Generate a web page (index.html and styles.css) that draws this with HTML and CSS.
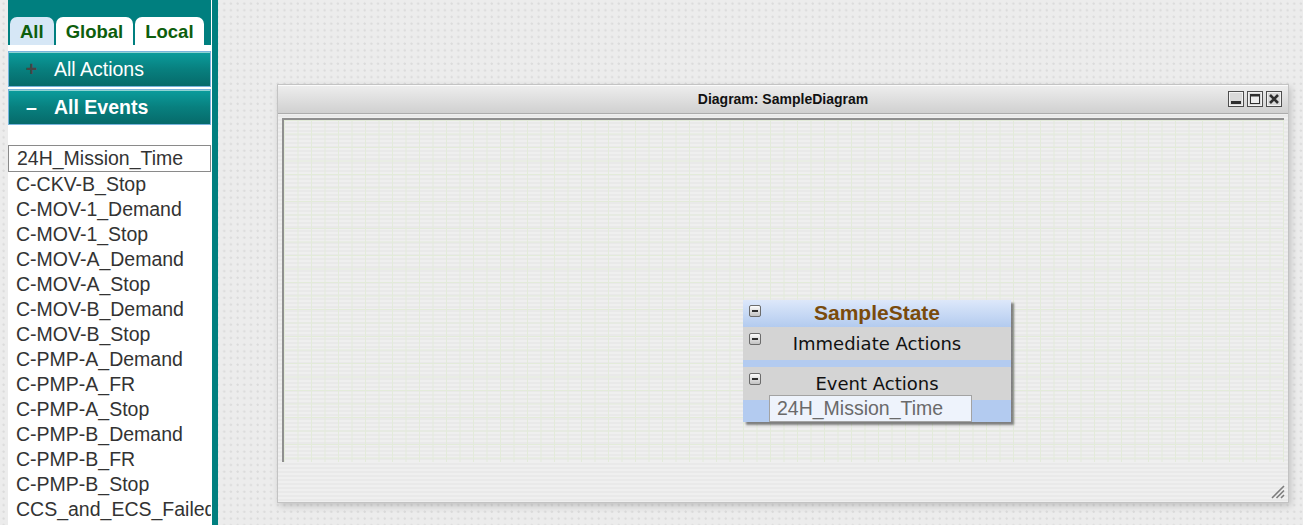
FILE: index.html
```html
<!DOCTYPE html>
<html lang="en">
<head>
<meta charset="utf-8">
<title>Diagram: SampleDiagram</title>
<link rel="stylesheet" href="styles.css">
</head>
<body>
<div class="app">
  <aside class="sidebar">
    <div class="tabs">
      <div class="tab active">All</div>
      <div class="tab">Global</div>
      <div class="tab">Local</div>
    </div>
    <div class="acc"><span class="sym plus">+</span><span>All Actions</span></div>
    <div class="acc open"><span class="sym">–</span><span>All Events</span></div>
    <ul class="events">
      <li class="selected">24H_Mission_Time</li>
      <li>C-CKV-B_Stop</li>
      <li>C-MOV-1_Demand</li>
      <li>C-MOV-1_Stop</li>
      <li>C-MOV-A_Demand</li>
      <li>C-MOV-A_Stop</li>
      <li>C-MOV-B_Demand</li>
      <li>C-MOV-B_Stop</li>
      <li>C-PMP-A_Demand</li>
      <li>C-PMP-A_FR</li>
      <li>C-PMP-A_Stop</li>
      <li>C-PMP-B_Demand</li>
      <li>C-PMP-B_FR</li>
      <li>C-PMP-B_Stop</li>
      <li>CCS_and_ECS_Failed</li>
    </ul>
  </aside>
  <div class="splitter"></div>
  <main class="workspace">
    <section class="window">
      <header class="titlebar">
        <span></span>
        <span class="title">Diagram: SampleDiagram</span>
        <span class="winbtns">
          <svg class="wbtn" width="16" height="16" viewBox="0 0 16 16"><rect x="0.5" y="0.5" width="15" height="15" fill="#d9d9d9" stroke="#4e4e4e"/><rect x="1.5" y="1.5" width="13" height="13" fill="none" stroke="#f2f2f2"/><rect x="3" y="10" width="10" height="3" fill="#2e2e2e"/></svg>
          <svg class="wbtn" width="16" height="16" viewBox="0 0 16 16"><rect x="0.5" y="0.5" width="15" height="15" fill="#d9d9d9" stroke="#4e4e4e"/><rect x="1.5" y="1.5" width="13" height="13" fill="none" stroke="#f2f2f2"/><rect x="3.5" y="3.5" width="9" height="9" fill="#ececec" stroke="#2e2e2e"/><rect x="3" y="3" width="10" height="2.5" fill="#2e2e2e"/></svg>
          <svg class="wbtn" width="16" height="16" viewBox="0 0 16 16"><rect x="0.5" y="0.5" width="15" height="15" fill="#d9d9d9" stroke="#4e4e4e"/><rect x="1.5" y="1.5" width="13" height="13" fill="none" stroke="#f2f2f2"/><path d="M4 4 L12 12 M12 4 L4 12" stroke="#2e2e2e" stroke-width="2.6"/></svg>
        </span>
      </header>
      <div class="winbody">
        <div class="canvas">
          <div class="node">
            <div class="node-head"><span class="minus"></span>SampleState</div>
            <div class="node-sec imm"><span class="minus"></span>Immediate Actions</div>
            <div class="node-sec"><span class="minus"></span>Event Actions</div>
            <div class="node-item">24H_Mission_Time</div>
          </div>
        </div>
      </div>
      <svg class="grip" width="15" height="15" viewBox="0 0 15 15"><path d="M14 2 L2 14 M14 6.5 L6.5 14 M14 11 L11 14" stroke="#7d7d7d" stroke-width="1.6"/></svg>
    </section>
  </main>
</div>
</body>
</html>
```
FILE: styles.css
```css
* { box-sizing: border-box; }
html, body { margin: 0; height: 100%; }
body {
  font-family: "Liberation Sans", Arial, sans-serif;
  background-color: #ececec;
  background-image: radial-gradient(circle at 3.5px 3.5px, #dbdbdb 0.9px, transparent 1.4px);
  background-size: 6.7px 6.7px;
  overflow: hidden;
}
.app { display: flex; height: 525px; padding-left: 8px; }

/* sidebar */
.sidebar { width: 203px; display: flex; flex-direction: column; background: #fff; }
.tabs {
  display: flex; gap: 2px;
  background: #007f7f;
  padding: 17px 0 0 2px;
  border-bottom: 6px solid #fff;
}
.tab {
  height: 28px; line-height: 29px;
  padding: 0 10px;
  background: #fff;
  border-radius: 7px 7px 0 0;
  font-weight: bold; font-size: 18.5px;
  color: #0d5e0d;
}
.tab.active { background: #d6e7f6; }
.acc {
  height: 36px; display: flex; align-items: center;
  margin-bottom: 2px;
  color: #fff; font-size: 19.5px;
  background: linear-gradient(#0b9d9d, #08807f 50%, #066a6a);
  border: 1px solid #78b3dc;
  box-shadow: inset 0 1px 0 #8fd3d3;
}
.acc.open { font-weight: bold; }
.acc .sym { width: 45px; text-align: center; font-weight: bold; }
.acc .sym.plus { color: #454545; }
.events {
  list-style: none; margin: 0; padding: 18px 0 0;
  flex: 1; overflow: hidden;
  font-size: 19.5px; color: #333;
}
.events li { height: 25px; line-height: 25px; padding: 0 8px; white-space: nowrap; }
.events li.selected { height: 27px; border: 1px solid #8a8a8a; line-height: 25px; }
.splitter { width: 7px; background: #007f7f; border-left: 1px solid #ffffff; }

/* workspace */
.workspace { flex: 1; padding: 84px 0 0 59px; }
.window {
  position: relative;
  width: 1012px; height: 419px;
  display: flex; flex-direction: column;
  border: 1px solid #c3c3c3;
  background: repeating-linear-gradient(#efefef 0 2px, #e9e9e9 2px 4px);
  box-shadow: 2px 3px 7px rgba(0,0,0,0.18);
}
.titlebar {
  height: 29px;
  display: grid; grid-template-columns: 1fr auto 1fr; align-items: center;
  background: linear-gradient(#eeeeee, #d0d0d0);
  border-bottom: 1px solid #acacac;
  box-shadow: inset 0 1px 0 #fbfbfb;
}
.title { font-weight: bold; font-size: 14px; color: #111; }
.winbtns { justify-self: end; display: flex; gap: 3px; padding-right: 6px; }
.wbtn { display: block; }
.winbody { padding: 4px 4px 0; }
.canvas {
  position: relative;
  height: 344px;
  border-top: 2px solid #8f8f8f;
  border-left: 2px solid #8f8f8f;
  background-image:
    linear-gradient(90deg, #e3ebda 1px, transparent 1px),
    linear-gradient(#e3ebda 1px, transparent 1px),
    repeating-linear-gradient(#efefef 0 2px, #e9e9e9 2px 4px);
  background-size: 13.5px 13.5px, 13.5px 13.5px, auto;
}
.grip { position: absolute; right: 3px; bottom: 3px; }

/* state node */
.node {
  position: absolute; left: 459px; top: 180px;
  width: 268px;
  background: #b3cbf0;
  box-shadow: 3px 3px 2px rgba(70,70,70,0.65);
}
.node-head {
  position: relative;
  height: 27px; line-height: 25px; text-align: center;
  background: linear-gradient(#dde8fa, #b3cbef);
  font-weight: bold; font-size: 21px; color: #7a4b0c;
}
.node-sec {
  position: relative;
  height: 33px; line-height: 34px; text-align: center;
  background: #d4d4d4;
  font-family: "DejaVu Sans", Verdana, sans-serif; font-size: 18px; color: #111;
}
.node-sec.imm { margin-bottom: 7px; }
.minus {
  position: absolute; left: 6px; top: 6px;
  width: 12px; height: 12px;
  border: 1px solid #6c6c6c; border-radius: 2px;
  background: linear-gradient(#fdfdfd, #c2c2c2);
}
.node-head .minus { top: 5px; }
.minus::after {
  content: ""; position: absolute; left: 2px; top: 4px;
  width: 6px; height: 2px; background: #2f2f2f;
}
.node-item {
  position: relative;
  margin: -5px 0 0 26px;
  width: 203px; height: 27px;
  padding-left: 7px;
  line-height: 25px;
  background: #eef3fc;
  border: 1px solid #a3a3a3;
  font-size: 19.5px; color: #6a6a6a;
}
```
